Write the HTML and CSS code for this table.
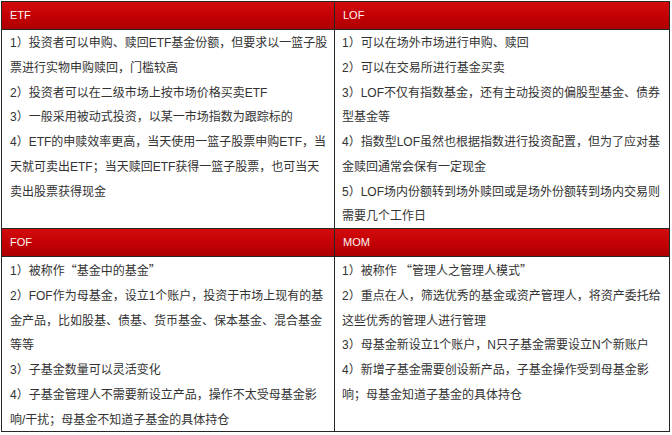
FILE: index.html
```html
<!DOCTYPE html>
<html lang="zh-CN">
<head>
<meta charset="utf-8">
<title>ETF LOF FOF MOM</title>
<link rel="stylesheet" href="styles.css">
</head>
<body>
<div class="compare">
  <div class="head">ETF</div>
  <div class="head">LOF</div>
  <div class="cell top">
    <p>1）投资者可以申购、赎回ETF基金份额，但要求以一篮子股<br>票进行实物申购赎回，门槛较高</p>
    <p>2）投资者可以在二级市场上按市场价格买卖ETF</p>
    <p>3）一般采用被动式投资，以某一市场指数为跟踪标的</p>
    <p>4）ETF的申赎效率更高，当天使用一篮子股票申购ETF，当<br>天就可卖出ETF；当天赎回ETF获得一篮子股票，也可当天<br>卖出股票获得现金</p>
  </div>
  <div class="cell top">
    <p>1）可以在场外市场进行申购、赎回</p>
    <p>2）可以在交易所进行基金买卖</p>
    <p>3）LOF不仅有指数基金，还有主动投资的偏股型基金、债券<br>型基金等</p>
    <p>4）指数型LOF虽然也根据指数进行投资配置，但为了应对基<br>金赎回通常会保有一定现金</p>
    <p>5）LOF场内份额转到场外赎回或是场外份额转到场内交易则<br>需要几个工作日</p>
  </div>
  <div class="head">FOF</div>
  <div class="head">MOM</div>
  <div class="cell bottom">
    <p>1）被称作<span class="q">“</span>基金中的基金<span class="q">”</span></p>
    <p>2）FOF作为母基金，设立1个账户，投资于市场上现有的基<br>金产品，比如股基、债基、货币基金、保本基金、混合基金<br>等等</p>
    <p>3）子基金数量可以灵活变化</p>
    <p>4）子基金管理人不需要新设立产品，操作不太受母基金影<br>响/干扰；母基金不知道子基金的具体持仓</p>
  </div>
  <div class="cell bottom">
    <p>1）被称作 <span class="q">“</span>管理人之管理人模式<span class="q">”</span></p>
    <p>2）重点在人，筛选优秀的基金或资产管理人，将资产委托给<br>这些优秀的管理人进行管理</p>
    <p>3）母基金新设立1个账户，N只子基金需要设立N个新账户</p>
    <p>4）新增子基金需要创设新产品，子基金操作受到母基金影<br>响；母基金知道子基金的具体持仓</p>
  </div>
</div>
</body>
</html>
```
FILE: styles.css
```css
html, body {
  margin: 0;
  padding: 0;
  background: #ffffff;
}

body {
  font-family: "Liberation Sans", "Noto Sans CJK SC", sans-serif;
}

.compare {
  display: grid;
  grid-template-columns: 332px 334px;
  grid-template-rows: 27px 198px 27px 174px;
  gap: 1px;
  width: 667px;
  margin: 1px 0 0 1px;
  border: 1px solid #262626;
  background: #262626;
}

.head {
  background: linear-gradient(#d20b0d, #c00004 60%, #ae0003);
  color: #fff4f4;
  font-size: 11px;
  line-height: 27px;
  padding-left: 8px;
}

.cell {
  background: #ffffff;
  color: #333333;
  font-size: 12px;
  line-height: 24.75px;
  padding: 1px 4px 0 8px;
  white-space: nowrap;
  overflow: hidden;
}

.cell + .cell {
  padding-left: 7px;
}

.cell p {
  margin: 0;
}

.q {
  font-family: "Noto Sans CJK SC", sans-serif;
}
```
